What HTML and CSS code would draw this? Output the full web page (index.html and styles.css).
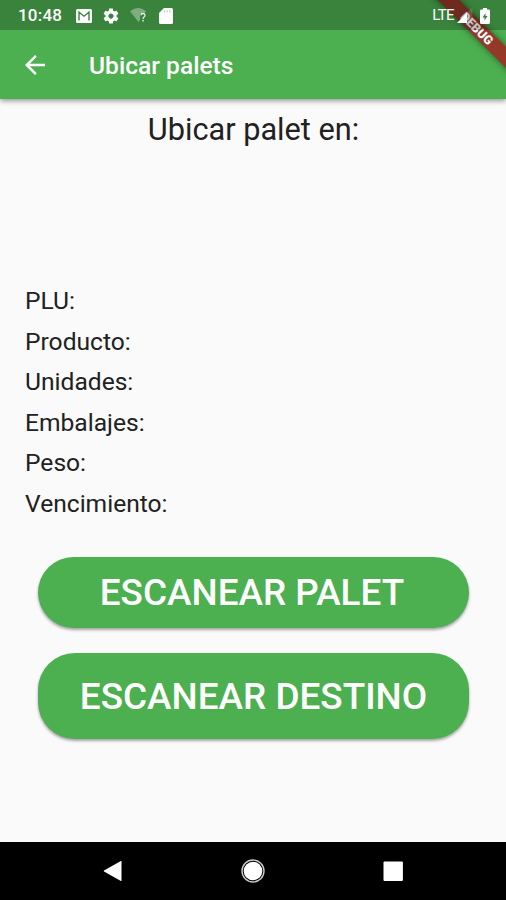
FILE: index.html
```html
<!DOCTYPE html>
<html lang="es">
<head>
    <meta charset="UTF-8">
    <meta name="viewport" content="width=device-width, initial-scale=1.0">
    <title>Ubicar palets</title>
    <link rel="stylesheet" href="styles.css">
</head>
<body>
    <div class="screen">
        <div class="header">
            <div class="status-bar">
                <span class="clock">10:48</span>
                <svg class="icon-mail" width="16" height="14" viewBox="0 0 16 14">
                    <rect width="16" height="14" rx="1.5" fill="#fff"/>
                    <path d="M3 11.500V3.200L8 7.200l5-4v8.300" fill="none" stroke="#3a823d" stroke-width="1.400"/>
                </svg>
                <svg class="icon-gear" width="18" height="18" viewBox="0 0 24 24">
                    <path fill="#fff" d="M19.43 12.98c.04-.32.07-.64.07-.98s-.03-.66-.07-.98l2.11-1.65c.19-.15.24-.42.12-.64l-2-3.46c-.12-.22-.39-.3-.61-.22l-2.49 1c-.52-.4-1.08-.73-1.69-.98l-.38-2.65C14.46 2.18 14.25 2 14 2h-4c-.25 0-.46.18-.49.42l-.38 2.65c-.61.25-1.17.59-1.69.98l-2.49-1c-.23-.09-.49 0-.61.22l-2 3.46c-.13.22-.07.49.12.64l2.11 1.65c-.04.32-.07.65-.07.98s.03.66.07.98l-2.11 1.65c-.19.15-.24.42-.12.64l2 3.46c.12.22.39.3.61.22l2.49-1c.52.4 1.08.73 1.69.98l.38 2.65c.03.24.24.42.49.42h4c.25 0 .46-.18.49-.42l.38-2.65c.61-.25 1.17-.59 1.69-.98l2.49 1c.23.09.49 0 .61-.22l2-3.46c.12-.22.07-.49-.12-.64l-2.11-1.65zM12 15.500c-1.930 0-3.500-1.570-3.500-3.500s1.570-3.500 3.500-3.500 3.500 1.570 3.500 3.500-1.570 3.500-3.500 3.500z"/>
                </svg>
                <svg class="icon-wifi" width="17" height="15" viewBox="0 0 17 15">
                    <path d="M0 3.200Q8-3 16 3.200L14.500 5Q10 4.500 10 8.500V12L8.500 14z" fill="#fff" opacity=".35"/>
                    <path d="M11 7.300q.2-1.800 2-1.800t2 1.700q0 1-1 1.800t-.9 2" fill="none" stroke="#fff" stroke-width="1.300" opacity=".85"/>
                    <rect x="12.300" y="12" width="1.500" height="1.500" fill="#fff" opacity=".85"/>
                </svg>
                <svg class="icon-sd" width="14" height="16" viewBox="0 0 14 16">
                    <path d="M5 0h7.500Q14 0 14 1.500v13q0 1.500-1.500 1.500h-11Q0 16 0 14.500V5z" fill="#fff"/>
                    <path d="M5.400 2.200v2.400M8.100 2.200v2.400M10.800 2.200v2.400" stroke="#b4d2b5" stroke-width="1.100"/>
                </svg>
                <span class="network">LTE</span>
                <svg class="icon-signal" width="16" height="17" viewBox="0 0 16 17">
                    <path d="M15.500 0v16H0z" fill="#fff" opacity=".15"/>
                    <path d="M10 5.700V16H0z" fill="#fff"/>
                </svg>
                <svg class="icon-battery" width="10" height="16" viewBox="0 0 10 16">
                    <path d="M3 0h4v1.600h1.500Q10 1.600 10 3v11.500Q10 16 8.500 16h-7Q0 16 0 14.500V3q0-1.400 1.500-1.400H3z" fill="#fff"/>
                    <path d="M5.500 5L2.500 9.400h2v3.100l3-4.500h-2z" fill="#3a823d"/>
                </svg>
            </div>
            <div class="app-bar">
                <svg class="back" width="30" height="30" viewBox="0 0 24 24">
                    <path fill="#fff" d="M20 11H7.830l5.590-5.590L12 4l-8 8 8 8 1.410-1.410L7.830 13H20v-2z"/>
                </svg>
                <h1 class="title">Ubicar palets</h1>
            </div>
        </div>

        <div class="content">
            <h2 class="heading">Ubicar palet en:</h2>
            <div class="details">
                <p>PLU:</p>
                <p>Producto:</p>
                <p>Unidades:</p>
                <p>Embalajes:</p>
                <p>Peso:</p>
                <p>Vencimiento:</p>
            </div>
            <div class="buttons">
                <button class="btn">ESCANEAR PALET</button>
                <button class="btn btn-tall">ESCANEAR DESTINO</button>
            </div>
        </div>

        <div class="nav-bar">
            <svg width="24" height="24" viewBox="0 0 24 24">
                <path d="M20.500 2.300v19.400q0 .6-.6.300L3 12.500q-.5-.5 0-1L19.900 2q.6-.3.600.3z" fill="#fff"/>
            </svg>
            <svg width="24" height="24" viewBox="0 0 24 24">
                <circle cx="12" cy="12" r="11" fill="none" stroke="#ccc" stroke-width="1.400"/>
                <circle cx="12" cy="12" r="9.300" fill="#fff"/>
            </svg>
            <svg width="24" height="24" viewBox="0 0 24 24">
                <rect x="2.500" y="2.500" width="19.400" height="19.400" rx="1" fill="#fff"/>
            </svg>
        </div>

        <div class="debug-banner">DEBUG</div>
    </div>
</body>
</html>
```
FILE: styles.css
```css
body {
    font-family: Roboto, sans-serif;
    margin: 0;
    background: #fafafa;
}
h1, h2, p {
    margin: 0;
    font-weight: 400;
}
.screen {
    position: relative;
    display: flex;
    flex-direction: column;
    width: 506px;
    height: 900px;
    overflow: hidden;
    background: #fafafa;
}
.header {
    background: #4caf50;
    box-shadow: 0 2px 5px rgba(0, 0, 0, 0.4);
    color: white;
}
/* the system bar stays on top of the debug ribbon */
.status-bar {
    position: relative;
    z-index: 2;
    display: flex;
    align-items: center;
    box-sizing: border-box;
    height: 30px;
    padding: 1px 16px 0 18px;
    background: rgba(0, 0, 0, 0.25);
}
.clock {
    width: 58px;
    font-size: 17px;
    font-weight: 500;
    line-height: 20px;
    letter-spacing: 0.2px;
    margin-top: -1px;
}
.icon-gear {
    margin-left: 10px;
}
.icon-wifi {
    margin-left: 10px;
}
.icon-sd {
    margin-left: 12px;
}
.network {
    margin-left: auto;
    margin-top: -1px;
    font-size: 15px;
    letter-spacing: -0.6px;
}
.icon-signal {
    margin-left: 3px;
}
.icon-battery {
    margin-left: 7px;
}
.app-bar {
    display: flex;
    align-items: center;
    height: 69px;
    padding-left: 20px;
}
.title {
    margin: 1px 0 0 39px;
    font-size: 24.6px;
    font-weight: 500;
}
.content {
    flex: 1;
    color: #212121;
}
.heading {
    padding: 13px 0 0 1px;
    font-size: 30.7px;
    line-height: 36px;
    text-align: center;
}
.details {
    margin: 133px 0 0 25px;
    font-size: 24.6px;
    line-height: 40.6px;
}
.buttons {
    display: flex;
    flex-direction: column;
    gap: 25px;
    margin: 32px 37px 0 38px;
}
.btn {
    height: 71px;
    padding: 0 3px 0 0;
    border: none;
    border-radius: 37px;
    background: #4caf50;
    box-shadow: 0 2px 3px rgba(0, 0, 0, 0.35);
    color: white;
    font-family: inherit;
    font-size: 36.9px;
    font-weight: 500;
    cursor: pointer;
}
.btn-tall {
    height: 86px;
    padding: 1px 0 0;
}
.nav-bar {
    display: flex;
    justify-content: space-between;
    align-items: center;
    box-sizing: border-box;
    height: 58px;
    padding: 0 101px 0 101px;
    background: black;
}
.debug-banner {
    position: absolute;
    z-index: 1;
    top: 21px;
    left: 417px;
    width: 120px;
    height: 15px;
    background: #95382a;
    box-shadow: 0 0 6px rgba(0, 0, 0, 0.5);
    color: white;
    font-size: 12.5px;
    font-weight: 900;
    line-height: 15px;
    text-align: center;
    transform: rotate(45deg);
}
```
